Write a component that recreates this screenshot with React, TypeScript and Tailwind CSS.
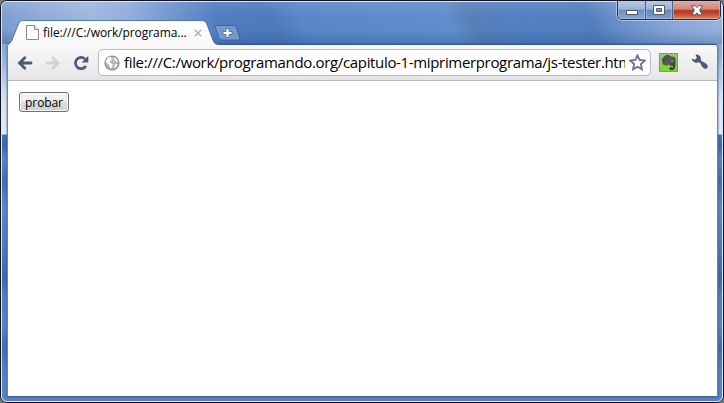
import React from "react";

function Tab() {
  return (
    <div className="relative z-10 mt-[18px] h-[25px] w-[218px] shrink-0">
      <svg className="absolute left-0 top-0" width="218" height="26" viewBox="0 0 218 26">
        <defs>
          <linearGradient id="tabFill" x1="0" y1="0" x2="0" y2="1">
            <stop offset="0" stopColor="#ffffff" />
            <stop offset="1" stopColor="#f9f9fa" />
          </linearGradient>
        </defs>
        <path
          d="M5 26V25.500C7 23.500 9 22.500 10 20L16 5C17.300 1.700 18.200.500 21.500.500L198 .500C202.500.500 204 1.500 205.200 5L210.500 19C212 23 213 24.500 216.500 24.500L216.500 26Z"
          fill="url(#tabFill)"
        />
        <path
          d="M5.500 25.500C7 23.500 9 22.500 10 20L16 5C17.300 1.700 18.200.500 21.500.500L198 .500C202.500.500 204 1.500 205.200 5L210.500 19C212 23 213 24.500 216.500 24.500"
          fill="none"
          stroke="#37619d"
          strokeOpacity=".8"
        />
      </svg>
      <div className="relative flex h-[25px] items-start pl-6 pt-[5px]">
        <svg width="13" height="15" viewBox="0 0 13 15">
          <path d="M.5.500h8l4 4v10H.5z" fill="#fcfcfc" stroke="#8a8a8a" />
          <path d="M8.500.500v4h4" fill="#ececec" stroke="#8a8a8a" />
        </svg>
        <span className="ml-[4px] w-[148px] whitespace-nowrap font-['Open_Sans','Noto_Sans',sans-serif] text-[12px] leading-[15px] tracking-[-0.06px] text-black">
          file:///C:/work/programa...
        </span>
        <svg className="ml-[3px] mt-1" width="8" height="8" viewBox="0 0 8 8">
          <path d="M.8.800l6.400 6.400M7.200.800L.8 7.200" stroke="#b1b1b1" strokeWidth="1.600" />
        </svg>
      </div>
    </div>
  );
}

function NewTab() {
  return (
    <svg className="-ml-[6px] mt-[23px] shrink-0" width="28" height="17" viewBox="0 0 28 17">
      <path
        d="M3.500.500h15.500c2 0 3 .7 3.700 2.500l2.600 8.500c.8 2.500.3 3.500-2 3.500H8.500c-2 0-3-.8-3.700-2.500L1.600 3.500C.9 1.500 1.300.500 3.500.500z"
        fill="#7699cd"
        stroke="#3c66a7"
      />
      <path d="M12 3.500h3v3h3v3h-3v3h-3v-3H9v-3h3z" fill="#fff" stroke="#4e6f9f" strokeWidth=".9" />
    </svg>
  );
}

function WindowControls() {
  return (
    <div className="-mt-px ml-auto mr-px flex h-[19px] w-[104px] overflow-hidden rounded-b-[5px] border border-t-0 border-[#1f304f] shadow-[0_0_0_1px_rgba(215,230,250,0.6)]">
      <div className="flex w-7 justify-center border-r border-[#46618e] bg-[linear-gradient(#b7c9e6,#9bb2d8_46%,#6e8ec1_50%,#86a5d3)] pl-px pt-[9px] shadow-[inset_0_0_0_1px_#b4c7e590]">
        <svg width="12" height="5" viewBox="0 0 12 5">
          <path d="M.5.500h11v4H.5z" fill="#fff" stroke="#535865" />
        </svg>
      </div>
      <div className="flex w-[27px] justify-center border-r border-[#46618e] bg-[linear-gradient(#b7c9e6,#9bb2d8_46%,#6685b8_50%,#7f9fd0)] pt-[4px] shadow-[inset_0_0_0_1px_#b4c7e590]">
        <svg width="12" height="10" viewBox="0 0 12 10">
          <path fillRule="evenodd" d="M.5.500h11v9H.5zM3.500 3.500v3h5v-3z" fill="#fff" stroke="#535865" />
        </svg>
      </div>
      <div className="flex grow justify-center bg-[linear-gradient(#e5aaa0,#d0877b_46%,#b83724_50%,#be4632_70%,#da8b69)] pt-[4px] shadow-[inset_0_0_0_1px_#edb8ad80]">
        <svg width="12" height="11" viewBox="0 0 12 11">
          <path
            d="M.8.700h3.500L6 2.600 7.700.700h3.500L8.600 5.200l2.700 4.600H7.800L6 7.800 4.200 9.800H.7L3.400 5.200z"
            fill="#fff"
            stroke="#515462"
            strokeWidth=".9"
          />
        </svg>
      </div>
    </div>
  );
}

function Globe() {
  return (
    <svg className="shrink-0" width="16" height="16" viewBox="0 0 16 16">
      <circle cx="8" cy="8" r="7" fill="#b5b5b5" stroke="#858585" strokeWidth="1.200" />
      <path d="M5.200 1.800l2.200.3-.4 1.400 1.400.8-1.600 1.500-1.300 1.700 1.900.8 1.500 1.200-.7 2.200-1.300 2.100-1.500-2.200-.4-2.100L2.600 8l-.9-1.500A7 7 0 0 1 5.200 1.800z" fill="#fafafa" />
      <path d="M9.700 2.300l2.500.9 1.900 3.100-.8.800-1.400-.4-1.100-1.500-1-.7zM11 9l2.900.3-1.300 2.800-2 1.400-.4-2.300z" fill="#f3f3f3" />
    </svg>
  );
}

function Elephant() {
  return (
    <svg className="ml-[8px] shrink-0" width="19" height="19" viewBox="0 0 19 19">
      <defs>
        <linearGradient id="leaf" x1="0" y1="0" x2="0" y2="1">
          <stop offset="0" stopColor="#9bc683" />
          <stop offset="1" stopColor="#7ad52f" />
        </linearGradient>
        <linearGradient id="hide" x1="0" y1="0" x2="1" y2="1">
          <stop offset="0" stopColor="#343733" />
          <stop offset=".45" stopColor="#5b5d5b" />
          <stop offset="1" stopColor="#30332e" />
        </linearGradient>
      </defs>
      <rect x=".5" y=".5" width="18" height="18" fill="url(#leaf)" stroke="#68b336" />
      <path
        d="M6.800 2L3.200 5.600c-.4 2 .1 4.500 1 6 1.500 1.100 3.400 1.300 4.900.6l.6-1.400c.3 1.400 1.200 1.900 2.400 2 1.400.1 2 .5 2 1.300s-.6 1.100-1.500 1v-1.300c-1.500 0-2.400.6-2.400 1.700 0 1.200 1.100 1.700 2.700 1.700 2.200 0 3.100-1.500 3.400-4.100.4-2.800.4-5.600-.1-8-.4-1.200-2-1.500-3.900-1.500C11 2.300 9 1.600 6.800 2z"
        fill="url(#hide)"
      />
      <path d="M3.300 5.800h3c.6 0 .8-.3.800-.8V2" fill="none" stroke="#73886a" strokeWidth=".6" />
      <path d="M12.100 8.500c.3-1.300 1.900-1.300 2.200.2z" fill="#a3cd8c" />
    </svg>
  );
}

function Toolbar() {
  return (
    <div className="flex h-[36px] shrink-0 items-center rounded-tr-[3px] border-b border-[#b5b6c1] bg-[linear-gradient(#f9f9fa,#e5e5e6)] pl-[9px]">
      <svg className="shrink-0" width="16" height="16" viewBox="0 0 16 16">
        <path d="M7.800 2.800L2.500 8l5.300 5.200M3 8h11" fill="none" stroke="#4d5975" strokeWidth="2.800" strokeLinecap="round" />
      </svg>
      <svg className="ml-[12px] shrink-0" width="16" height="16" viewBox="0 0 16 16">
        <path d="M7.700 2.800L13 8l-5.300 5.200M12.500 8H2" fill="none" stroke="#d0d2d8" strokeWidth="2.800" strokeLinecap="round" />
      </svg>
      <svg className="ml-[12px] shrink-0" width="16" height="16" viewBox="0 0 16 16">
        <path d="M12.800 11A5.600 5.600 0 1 1 12 4.100" fill="none" stroke="#4d5975" strokeWidth="2.700" />
        <path d="M15.300.800v6.700H8.600z" fill="#4d5975" />
      </svg>
      <div className="ml-[9px] flex h-[27px] w-[553px] shrink-0 items-center rounded-[5px] border border-[#b9bac1] bg-white pl-[5px]">
        <Globe />
        <div className="mb-px ml-[4px] w-[501px] shrink-0 overflow-hidden whitespace-nowrap font-['Open_Sans','Noto_Sans',sans-serif] text-[15px] leading-[24px] tracking-[-0.34px] text-black">
          file:///C:/work/programando.org/capitulo-1-miprimerprograma/js-tester.htm
        </div>
        <svg className="ml-[4px] shrink-0" width="17" height="17" viewBox="0 0 17 17">
          <path d="M8.500 1.300l2.100 4.700 5.100.6-3.800 3.500 1 5.200-4.400-2.600-4.400 2.600 1-5.200-3.800-3.500 5.100-.6z" fill="#fff" stroke="#66728e" strokeWidth="1.800" />
        </svg>
      </div>
      <Elephant />
      <svg className="ml-[13px] shrink-0" width="17" height="17" viewBox="0 0 17 17">
        <path
          d="M4.500.700C7.500.200 10 2.200 9.900 5l-.2 1.100 1.900 1.800c1.700.1 3 1.100 4.400 2.700 1 1.100 1 2.600.1 3.600-1 .9-2.500.9-3.600-.1-1.600-1.400-2.600-2.700-2.700-4.300L8 8.300C5 9.600.9 8.100.7 4.600l3.200 1.100L5.800 3.800z"
          fill="#4d5975"
        />
      </svg>
    </div>
  );
}

export default function App() {
  return (
    <div className="h-[403px] w-[724px] overflow-hidden bg-[#777a7d]">
      <div className="h-full overflow-hidden rounded-[7px] border border-[#10131f] bg-[#d4e9ff]">
        <div className="flex h-full flex-col rounded-[6px] border border-[#d4e9ff] bg-[linear-gradient(#8ba9d8_0,#8dabd9_50px,#dce3f2_100px,#e3e9f4_133px,#4674ba_134px,#3b69ae_144px,#5684c8_158px,#416eb2_181px,#5c88cb_205px,#4f7dc1_241px,#3d69ac_277px,#5280c4_296px,#5583c6_326px,#3f6db1_345px,#5583c5_373px,#5583c5)] bg-origin-border">
          <div className="flex h-[42px] shrink-0 items-start rounded-t-[5px] bg-[linear-gradient(#ffffff18_0,#ffffff00_40%,#ffffff00_65%,#173f7b40),linear-gradient(66deg,#7899ce_0,#92add9_8%,#9fb7df_14%,#91addb_19%,#6e94cf_25%,#4f7cc0_31%,#4d7abd_38%,#5886c9_42%,#608dcc_62%,#577fb8_65%,#5280c4_72%,#527dbd_81%,#658cc7_84%,#85a4d6_91%,#9bb5df)]">
            <Tab />
            <NewTab />
            <WindowControls />
          </div>
          <div className="mb-[4px] ml-[5px] mr-[4px] flex min-h-0 grow flex-col rounded-tr-[4px] border border-x-[#7083a0] border-b-[#496487] border-t-[#315a91] bg-white shadow-[0_0_2px_#254c85]">
            <Toolbar />
            <main className="grow bg-white pl-[11px] pt-[11px]">
              <button className="flex h-[20px] w-[50px] items-center justify-center rounded-[3px] border border-[#707070] bg-[linear-gradient(#f4f4f4,#ececec_48%,#dddddd_50%,#cfcfcf)] pt-px font-['Open_Sans','Noto_Sans',sans-serif] text-[12px] leading-[16px] tracking-[-0.1px] text-black shadow-[inset_0_0_0_1px_#fafafa]">
                probar
              </button>
            </main>
          </div>
        </div>
      </div>
    </div>
  );
}
